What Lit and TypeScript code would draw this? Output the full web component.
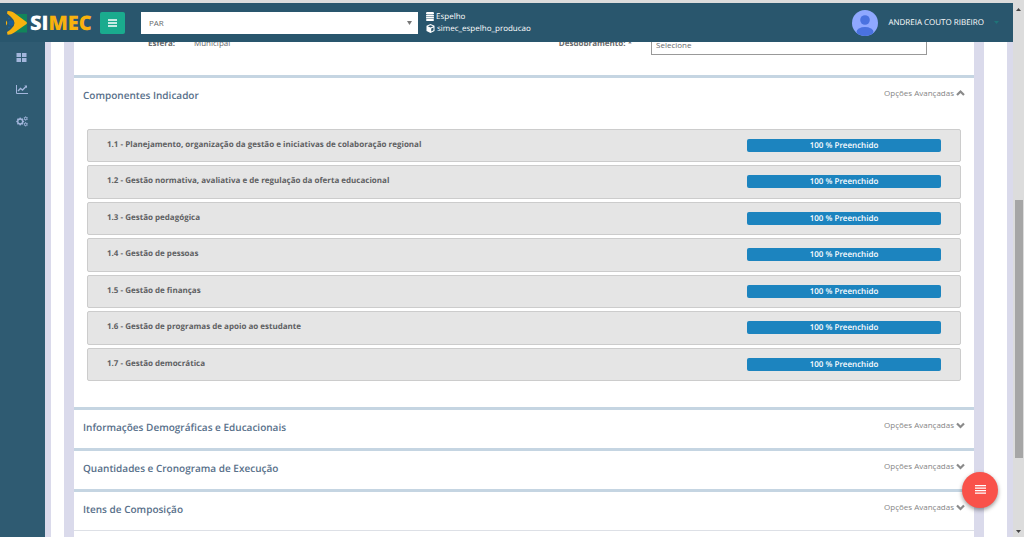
import { LitElement, html, css, svg } from "lit";
import { customElement, property } from "lit/decorators.js";

const ITEMS = [
  "1.1 - Planejamento, organização da gestão e iniciativas de colaboração regional",
  "1.2 - Gestão normativa, avaliativa e de regulação da oferta educacional",
  "1.3 - Gestão pedagógica",
  "1.4 - Gestão de pessoas",
  "1.5 - Gestão de finanças",
  "1.6 - Gestão de programas de apoio ao estudante",
  "1.7 - Gestão democrática",
];

const gear = (cx: number, cy: number, r: number, w: number, teeth: number) => svg`
  <circle cx=${cx} cy=${cy} r=${r} fill="none" stroke="currentColor" stroke-width=${w}></circle>
  ${Array.from({ length: teeth }, (_, i) => svg`
    <rect x=${cx - w / 2} y=${cy - r - w} width=${w} height=${w} fill="currentColor"
      transform="rotate(${(360 / teeth) * i} ${cx} ${cy})"></rect>`)}`;

@customElement("simec-section")
export class SimecSection extends LitElement {
  @property() heading = "";
  @property({ type: Boolean }) open = false;

  static styles = css`
    :host { display: block; border-top: 3px solid #c5d5e2; }
    .head {
      display: flex; justify-content: space-between; align-items: flex-start;
      height: 38px; box-sizing: border-box; padding: 8px 9px 0;
    }
    h2 { margin: 0; padding-top: 1px; font-size: 10px; line-height: 16px; font-weight: 600; color: #58708a; }
    button {
      display: flex; align-items: center; gap: 2px; padding: 0; border: 0; background: none;
      font: inherit; font-size: 8px; line-height: 14px; color: #858585;
    }
    svg { width: 9px; height: 8px; }
  `;

  render() {
    return html`
      <div class="head">
        <h2>${this.heading}</h2>
        <button type="button" aria-expanded=${this.open ? "true" : "false"}>
          Opções Avançadas
          <svg viewBox="0 0 9 8" fill="none" stroke="#8a8a8a" stroke-width="2.2">
            <path d=${this.open ? "M1 6 4.5 2.5 8 6" : "M1 2.5 4.5 6 8 2.5"}></path>
          </svg>
        </button>
      </div>
      <slot></slot>`;
  }
}

@customElement("app-root")
export class AppRoot extends LitElement {
  static styles = css`
    :host {
      display: flex; flex-direction: column; height: 100vh; overflow: hidden;
      font-family: "Open Sans", sans-serif; font-size: 8px; color: #676a6c; background: #fff;
      text-rendering: geometricPrecision;
    }
    .edge { flex: none; height: 3px; background: #dcdcdc; }
    .window { flex: 1; min-height: 0; display: flex; }
    .app { flex: 1; min-width: 0; display: flex; flex-direction: column; }
    header {
      flex: none; height: 39px; display: flex; align-items: center;
      background: #29566d; color: #fff; padding: 0 14px 0 6px; box-sizing: border-box;
    }
    .logo { flex: none; width: 86px; height: 26px; margin-right: 8px; }
    .logo text { font-family: "Open Sans", sans-serif; font-weight: 800; font-size: 20px; }
    .burger {
      flex: none; width: 25px; height: 22px; padding: 0; border: 0; border-radius: 2px;
      display: grid; place-items: center; background: #1aab8e; margin-right: 16px;
    }
    .picker {
      flex: 0 1 277px; height: 22px; display: grid; align-items: center; margin-right: 8px;
      background: #fff;
    }
    .picker select, .picker svg { grid-area: 1 / 1; }
    .picker svg { justify-self: end; margin-right: 6px; pointer-events: none; }
    select {
      appearance: none; border: 0; border-radius: 0; margin: 0; background: none;
      font-family: inherit; font-size: 8px; color: #676a6c; width: 100%; height: 22px; padding: 0 8px;
    }
    .env { display: grid; line-height: 12px; }
    .env span { display: flex; align-items: center; gap: 2px; }
    .user { margin-left: auto; display: flex; align-items: center; gap: 10px; }
    .user svg { flex: none; }
    .body { flex: 1; min-height: 0; display: flex; }
    nav {
      flex: none; width: 45px; box-sizing: border-box; background: #2f5b72; padding-top: 9px;
      display: flex; flex-direction: column; gap: 20px; align-items: center;
    }
    nav a { color: #a3b6dc; height: 12px; padding-right: 2px; }
    nav svg { display: block; }
    .page { flex: 1; min-width: 0; display: flex; padding: 0 6px; background: #dadaeb; }
    .panel { flex: 1; min-width: 0; display: flex; padding: 0 23px 0 13px; background: #fff; }
    .frame {
      flex: 1; min-width: 0; padding: 0 10px; background: #dadaeb; overflow: hidden;
      display: flex; flex-direction: column;
    }
    .content { flex: 1 0 auto; background: #fff; margin-top: -10px; }
    .form {
      display: grid; grid-template-columns: 101px 1fr 197px 276px; column-gap: 19px;
      align-items: start; height: 43px; padding-right: 47px; line-height: 14px;
    }
    .form > * { margin-top: 5px; }
    .form b, .form label { font-weight: 700; text-align: right; }
    .form select { margin-top: 1px; height: 22px; border: 1px solid #999; padding: 0 4px; box-sizing: border-box; }
    ul {
      list-style: none; margin: 13px 13px 26px; padding: 0; height: 252px;
      display: grid; grid-auto-rows: 1fr; gap: 3px;
    }
    li {
      display: flex; justify-content: space-between; align-items: flex-start; box-sizing: border-box;
      padding: 8px 19px 0; background: #e5e5e5; border: 1px solid #ccc; border-radius: 2px;
      font-weight: 700; line-height: 14px; color: #5f6163;
    }
    .bar {
      flex: none; width: 194px; height: 13px; line-height: 13px; margin-top: 1px; border-radius: 2px;
      background: #1c84bf; color: #fff; font-weight: 600; text-align: center;
    }
    .end { border-top: 1px solid #dde0e6; }
    .scroll {
      flex: none; width: 11px; background: #dcdcdc; display: grid;
      grid-template-rows: 12px 185fr 259fr 67fr 12px; justify-items: center; align-items: center;
    }
    .thumb { grid-row: 3; width: 8px; height: 100%; background: #a6a6a6; }
    .scroll svg:last-child { grid-row: 5; }
    .fab {
      position: absolute; right: 26px; bottom: 29px; width: 36px; height: 36px; padding: 0;
      border: 0; border-radius: 50%; background: #f9524a; display: grid; place-items: center;
      box-shadow: 0 2px 4px rgba(0, 0, 0, 0.4);
    }
  `;

  render() {
    return html`
      <div class="edge"></div>
      <div class="window">
        <div class="app">
          <header>
            <svg class="logo" viewBox="0 0 86 26" role="img" aria-label="SIMEC">
              <path d="M9 4h12v18.500H9z" fill="#12855a"></path>
              <path d="M1.500 1C4 .7 6 1.500 8 2.700L20.500 12Q21.500 13 20.500 14L8 22.800Q5 25 1.500 24.800L1 22 4 20 5.500 18.500Q8.500 16 8.500 13 8.500 10 5.500 7.500L4 6 1 3.500z" fill="#f8b20e"></path>
              <circle cx="5" cy="13" r="2.800" fill="#1c5f9a"></circle>
              <circle cx="3" cy="8.500" r="1" fill="#1c5f9a"></circle>
              <circle cx="3" cy="17.500" r="1" fill="#1c5f9a"></circle>
              <path d="M0 10.500q2.500 2.500 0 5z" fill="#f8b20e"></path>
              <text x="24" y="20" fill="#fff">SI<tspan fill="#f8b20e">MEC</tspan></text>
            </svg>
            <button class="burger" type="button" aria-label="Menu">
              <svg width="9" height="8" viewBox="0 0 9 8"><path d="M0 1h9M0 4h9M0 7h9" stroke="#fff" stroke-width="1.500"></path></svg>
            </button>
            <div class="picker">
              <select aria-label="Módulo"><option>PAR</option></select>
              <svg width="5" height="4" viewBox="0 0 5 4"><path d="M0 0h5L2.500 4z" fill="#777"></path></svg>
            </div>
            <div class="env">
              <span>
                <svg width="8" height="9" viewBox="0 0 8 9" fill="#fff"><rect width="8" height="2.500" rx="1.200"></rect><rect y="3" width="8" height="1.500" rx=".5"></rect><rect y="5" width="8" height="1.500" rx=".5"></rect><rect y="7" width="8" height="2" rx="1"></rect></svg>
                Espelho
              </span>
              <span>
                <svg width="9" height="9" viewBox="0 0 9 9"><path d="M4.500 0 8.500 1.800V7L4.500 9 .5 7V1.800z" fill="#fff"></path><path d="M1.700 2.300 4.500 3.400 7.300 2.300 4.500 1.200zM5.200 4.500v3l2.300-1.200V3.500z" fill="#29566d"></path></svg>
                simec_espelho_producao
              </span>
            </div>
            <div class="user">
              <svg width="26" height="26" viewBox="0 0 26 26">
                <defs><clipPath id="face"><circle cx="13" cy="13" r="13"></circle></clipPath></defs>
                <g clip-path="url(#face)"><path d="M0 0h26v26H0z" fill="#8fa8ff"></path><circle cx="13" cy="10" r="4.800" fill="#4a72e0"></circle><ellipse cx="13" cy="22" rx="8.500" ry="5" fill="#4a72e0"></ellipse></g>
              </svg>
              <span>ANDREIA COUTO RIBEIRO</span>
              <svg width="5" height="3" viewBox="0 0 5 3"><path d="M0 0h5L2.500 3z" fill="#1f7478"></path></svg>
            </div>
          </header>
          <div class="body">
            <nav aria-label="Principal">
              <a href="#painel" aria-label="Painel"><svg width="11" height="12" viewBox="0 0 11 12" fill="currentColor"><path d="M.5 2H5v4H.5zM6 2h4.500v4H6zM.5 7H5v4H.5zM6 7h4.500v4H6z"></path></svg></a>
              <a href="#graficos" aria-label="Gráficos"><svg width="12" height="12" viewBox="0 0 12 12" fill="none" stroke="currentColor"><path d="M.5 2v8.500H12"></path><path d="m2 8 2.500-2.500L6.500 7 10 3.500" stroke-width="1.400"></path><path d="M8.300 2.500H11v2.700z" fill="currentColor" stroke="none"></path></svg></a>
              <a href="#config" aria-label="Configurações"><svg width="12" height="12" viewBox="0 0 12 12">${gear(4.2, 6.5, 2.5, 1.4, 8)}${gear(9.7, 3.5, 1.2, 0.9, 6)}${gear(9.7, 9.3, 1.2, 0.9, 6)}</svg></a>
            </nav>
            <div class="page">
              <div class="panel">
                <div class="frame">
                  <main class="content">
                    <div class="form">
                      <b>Esfera:</b>
                      <span>Municipal</span>
                      <label for="desdobramento">Desdobramento: *</label>
                      <select id="desdobramento"><option>Selecione</option></select>
                    </div>
                    <simec-section heading="Componentes Indicador" open>
                      <ul>
                        ${ITEMS.map((t) => html`<li><span>${t}</span><span class="bar">100 % Preenchido</span></li>`)}
                      </ul>
                    </simec-section>
                    <simec-section heading="Informações Demográficas e Educacionais"></simec-section>
                    <simec-section heading="Quantidades e Cronograma de Execução"></simec-section>
                    <simec-section heading="Itens de Composição"></simec-section>
                    <div class="end"></div>
                  </main>
                </div>
              </div>
            </div>
          </div>
        </div>
        <div class="scroll">
          <svg width="5" height="3" viewBox="0 0 5 3"><path d="M0 3h5L2.500 0z" fill="#444"></path></svg>
          <div class="thumb"></div>
          <svg width="5" height="3" viewBox="0 0 5 3"><path d="M0 0h5L2.500 3z" fill="#444"></path></svg>
        </div>
      </div>
      <button class="fab" type="button" aria-label="Ações">
        <svg width="11" height="10" viewBox="0 0 11 10"><path d="M0 .7h11M0 3.200h11M0 5.700h11M0 8.200h11" stroke="#fff" stroke-width="1.300"></path></svg>
      </button>`;
  }
}
